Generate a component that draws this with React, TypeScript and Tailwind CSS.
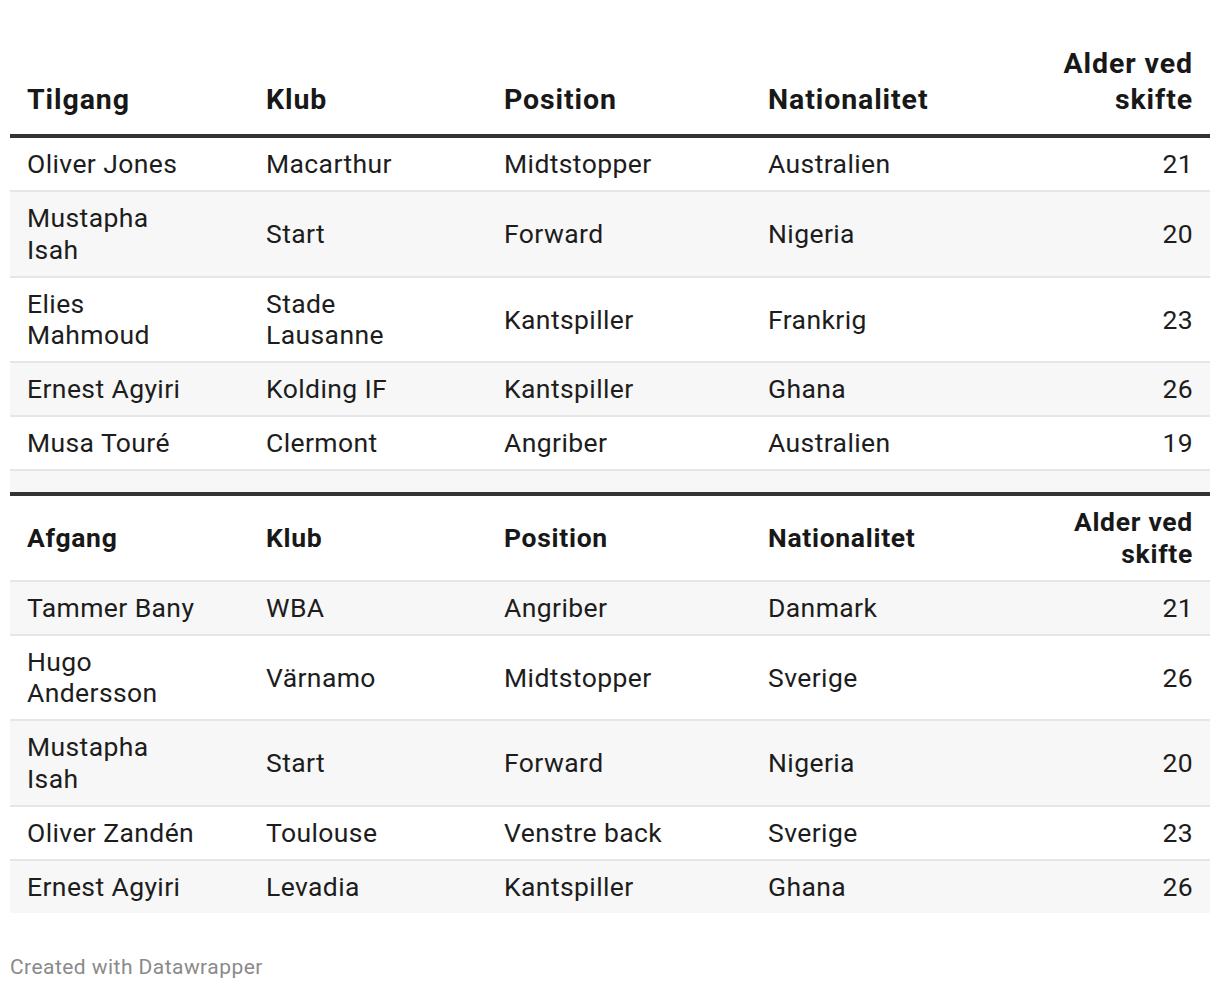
import React from 'react'

type Row = [string, string, string, string, string]

const tilgang: Row[] = [
    ['Oliver Jones', 'Macarthur', 'Midtstopper', 'Australien', '21'],
    ['Mustapha Isah', 'Start', 'Forward', 'Nigeria', '20'],
    ['Elies Mahmoud', 'Stade Lausanne', 'Kantspiller', 'Frankrig', '23'],
    ['Ernest Agyiri', 'Kolding IF', 'Kantspiller', 'Ghana', '26'],
    ['Musa Touré', 'Clermont', 'Angriber', 'Australien', '19'],
]

const afgang: Row[] = [
    ['Tammer Bany', 'WBA', 'Angriber', 'Danmark', '21'],
    ['Hugo Andersson', 'Värnamo', 'Midtstopper', 'Sverige', '26'],
    ['Mustapha Isah', 'Start', 'Forward', 'Nigeria', '20'],
    ['Oliver Zandén', 'Toulouse', 'Venstre back', 'Sverige', '23'],
    ['Ernest Agyiri', 'Levadia', 'Kantspiller', 'Ghana', '26'],
]

const cell = 'align-middle py-[10.25px] pl-[17px] pr-[46px]'
const numCell = 'align-middle py-[10.25px] pr-[17px] pl-[10px] text-right'
const line = ' border-b-2 border-[#e6e6e6]'
const headCell = 'align-bottom pt-[11px] pb-[16px] border-b-4 border-[#333333]'

function DataRow({ row, striped, last }: { row: Row; striped: boolean; last?: boolean }) {
    const bg = striped ? 'bg-[#f7f7f7]' : 'bg-white'
    const b = last ? '' : line
    return (
        <tr className={bg}>
            <td className={cell + b}>{row[0]}</td>
            <td className={cell + b}>{row[1]}</td>
            <td className={cell + b}>{row[2]}</td>
            <td className={cell + b}>{row[3]}</td>
            <td className={numCell + b}>{row[4]}</td>
        </tr>
    )
}

export default function App() {
    return (
        <div className="min-h-screen bg-white px-[10px] pt-[35px] font-['Roboto',sans-serif] text-[#1d1d1d]">
            <table className="w-[1200px] table-fixed border-separate border-spacing-0 text-[26.5px] leading-[31.5px] tracking-[0.4px]">
                <colgroup>
                    <col className="w-[239px]" />
                    <col className="w-[238px]" />
                    <col className="w-[264px]" />
                    <col className="w-[270px]" />
                    <col />
                </colgroup>
                <thead>
                    <tr className="text-[28.5px] leading-[36px] font-bold tracking-[0.9px] text-[#181818]">
                        <th className={headCell + ' text-left pl-[17px]'}>Tilgang</th>
                        <th className={headCell + ' text-left pl-[17px]'}>Klub</th>
                        <th className={headCell + ' text-left pl-[17px]'}>Position</th>
                        <th className={headCell + ' text-left pl-[17px]'}>Nationalitet</th>
                        <th className={headCell + ' text-right pr-[17px]'}>Alder ved skifte</th>
                    </tr>
                </thead>
                <tbody>
                    {tilgang.map((r, i) => (
                        <DataRow key={'t' + i} row={r} striped={i % 2 === 1} />
                    ))}
                    {/* spacer between the two blocks */}
                    <tr className="bg-[#f7f7f7]">
                        <td colSpan={5} className="h-[25px] p-0 border-b-4 border-[#333333]"></td>
                    </tr>
                    <tr className="bg-white font-bold tracking-[0.7px] text-[#181818]">
                        <td className={cell + line}>Afgang</td>
                        <td className={cell + line}>Klub</td>
                        <td className={cell + line}>Position</td>
                        <td className={cell + line}>Nationalitet</td>
                        <td className={numCell + line}>Alder ved skifte</td>
                    </tr>
                    {afgang.map((r, i) => (
                        <DataRow key={'a' + i} row={r} striped={i % 2 === 0} last={i === afgang.length - 1} />
                    ))}
                </tbody>
            </table>
            <div className="mt-[42px] text-[21px] leading-[24px] tracking-[0.45px] text-[#8a8a8a]">Created with Datawrapper</div>
        </div>
    )
}
